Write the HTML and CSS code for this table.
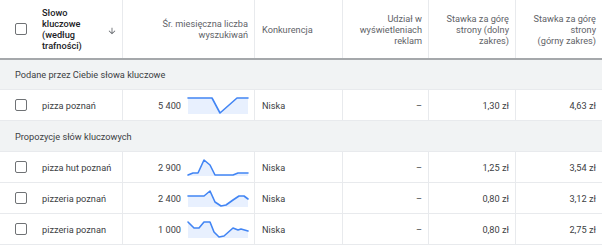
FILE: index.html
```html
<!DOCTYPE html>
<html lang="pl">
<head>
<meta charset="utf-8">
<title>Planer słów kluczowych</title>
<link rel="stylesheet" href="styles.css">
</head>
<body>
<div class="table">
  <div class="row head">
    <div class="cell kw">
      <span class="cb"></span>
      <span class="kw-title">Słowo kluczowe (według trafności)</span>
      <svg class="sort" viewBox="0 0 24 24" width="10" height="10"><path d="M20 12l-1.41-1.41L13 16.17V4h-2v12.17l-5.58-5.59L4 12l8 8 8-8z"/></svg>
    </div>
    <div class="cell num"><span>Śr. miesięczna liczba<br>wyszukiwań</span></div>
    <div class="cell txt"><span>Konkurencja</span></div>
    <div class="cell num"><span>Udział w<br>wyświetleniach<br>reklam</span></div>
    <div class="cell num"><span>Stawka za górę<br>strony (dolny<br>zakres)</span></div>
    <div class="cell num"><span>Stawka za górę<br>strony<br>(górny zakres)</span></div>
  </div>

  <div class="group">Podane przez Ciebie słowa kluczowe</div>

  <div class="row data">
    <div class="cell kw"><span class="cb"></span><span>pizza poznań</span></div>
    <div class="cell vol"><span>5 400</span>
      <svg class="spark" viewBox="0 0 60 17" width="60" height="17"><polygon class="area" points="0,1 24,1 32,16 49,1 60,1 60,17 0,17"/><polyline class="line" points="0,1 24,1 32,16 49,1 60,1"/></svg>
    </div>
    <div class="cell txt">Niska</div>
    <div class="cell num">–</div>
    <div class="cell num">1,30 zł</div>
    <div class="cell num">4,63 zł</div>
  </div>

  <div class="group tall">Propozycje słów kluczowych</div>

  <div class="row data">
    <div class="cell kw"><span class="cb"></span><span>pizza hut poznań</span></div>
    <div class="cell vol"><span>2 900</span>
      <svg class="spark" viewBox="0 0 60 17" width="60" height="17"><polygon class="area" points="0,16 5,14 10,14 16,1 22,6 27,16 45,16 50,14 60,14 60,17 0,17"/><polyline class="line" points="0,16 5,14 10,14 16,1 22,6 27,16 45,16 50,14 60,14"/></svg>
    </div>
    <div class="cell txt">Niska</div>
    <div class="cell num">–</div>
    <div class="cell num">1,25 zł</div>
    <div class="cell num">3,54 zł</div>
  </div>

  <div class="row data">
    <div class="cell kw"><span class="cb"></span><span>pizzeria poznań</span></div>
    <div class="cell vol"><span>2 400</span>
      <svg class="spark" viewBox="0 0 60 17" width="60" height="17"><polygon class="area" points="0,6 16,6 22,1 27,12 33,16 38,15 45,10 51,6 56,6 60,9 60,17 0,17"/><polyline class="line" points="0,6 16,6 22,1 27,12 33,16 38,15 45,10 51,6 56,6 60,9"/></svg>
    </div>
    <div class="cell txt">Niska</div>
    <div class="cell num">–</div>
    <div class="cell num">0,80 zł</div>
    <div class="cell num">3,12 zł</div>
  </div>

  <div class="row data">
    <div class="cell kw"><span class="cb"></span><span>pizzeria poznan</span></div>
    <div class="cell vol"><span>1 000</span>
      <svg class="spark" viewBox="0 0 60 17" width="60" height="17"><polygon class="area" points="0,1 6,7 11,7 16,1 22,1 26,11 31,16 36,15 45,7 50,9 53,8 60,10 60,17 0,17"/><polyline class="line" points="0,1 6,7 11,7 16,1 22,1 26,11 31,16 36,15 45,7 50,9 53,8 60,10"/></svg>
    </div>
    <div class="cell txt">Niska</div>
    <div class="cell num">–</div>
    <div class="cell num">0,80 zł</div>
    <div class="cell num">2,75 zł</div>
  </div>
</div>
</body>
</html>
```
FILE: styles.css
```css
html, body {
  margin: 0;
  padding: 0;
  background: #ffffff;
}

body {
  font-family: Roboto, "Liberation Sans", Arial, sans-serif;
  font-size: 9.2px;
  line-height: 11px;
  color: #3c4043;
  width: 602px;
  overflow: hidden;
}

.table {
  display: flex;
  flex-direction: column;
  width: 602px;
}

.row {
  display: grid;
  grid-template-columns: 122px 132px 88px 86px 87px 87px;
  border-bottom: 1px solid #e8eaed;
}

.row.head {
  height: 58px;
  border-bottom: 2px solid #a5a8ab;
  color: #5f6368;
}

.row.data {
  height: 30px;
}

.cell {
  display: flex;
  align-items: center;
  min-width: 0;
}

.cell + .cell {
  border-left: 1px solid #e8eaed;
}

.cell.kw {
  padding-left: 15px;
  gap: 15px;
}

.cell.num {
  justify-content: flex-end;
  text-align: right;
  padding-right: 6px;
}

.cell.txt {
  padding-left: 7px;
}

.cell.vol {
  justify-content: flex-end;
  padding-right: 6px;
  gap: 7px;
}

.kw-title {
  width: 60px;
  font-weight: 500;
  color: #202124;
}

.head .sort {
  fill: #5f6368;
  margin-left: -10px;
  margin-top: 4px;
}

.cb {
  box-sizing: border-box;
  width: 12px;
  height: 12px;
  border: 1.5px solid #6f7275;
  border-radius: 2px;
  flex: none;
}

.group {
  height: 29px;
  display: flex;
  align-items: center;
  padding-left: 15px;
  background: #f1f3f4;
  border-bottom: 1px solid #e8eaed;
}

.group.tall {
  height: 30px;
}

.spark {
  display: block;
  flex: none;
  overflow: visible;
}

.spark .area {
  fill: #e8f0fe;
}

.spark .line {
  fill: none;
  stroke: #4285f4;
  stroke-width: 1.6;
  stroke-linejoin: round;
  stroke-linecap: round;
}
```
